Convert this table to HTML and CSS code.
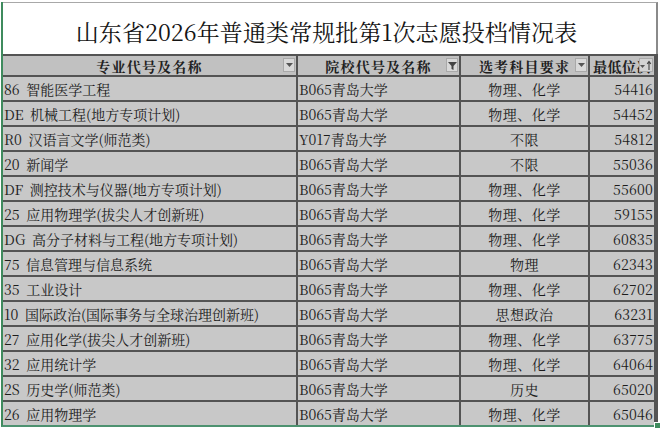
FILE: index.html
```html
<!DOCTYPE html>
<html lang="zh-CN">
<head>
<meta charset="utf-8">
<title>山东省2026年普通类常规批第1次志愿投档情况表</title>
<link rel="stylesheet" href="styles.css">
</head>
<body>
<div class="sheet">
  <div class="title">山东省2026年普通类常规批第1次志愿投档情况表</div>
  <div class="grid">
    <div class="hd">专业代号及名称<span class="btn"><svg width="7" height="4" viewBox="0 0 7 4"><path d="M0 0h7L3.5 4z" fill="#555"/></svg></span></div>
    <div class="hd">院校代号及名称<span class="btn"><svg width="9" height="9" viewBox="0 0 9 9"><path d="M0 1h9L5.5 5v4L3.5 8V5z" fill="#444"/></svg></span></div>
    <div class="hd">选考科目要求<span class="btn"><svg width="7" height="4" viewBox="0 0 7 4"><path d="M0 0h7L3.5 4z" fill="#555"/></svg></span></div>
    <div class="hd hd-last">最低位次<span class="btn btn-sort"><svg width="12" height="10" viewBox="0 0 12 10"><path d="M0 5h5L2.5 8z" fill="#555"/><path d="M9 2v8M7.2 3.8L9 1.5l1.8 2.3" stroke="#444" stroke-width="1.1" fill="none"/></svg></span></div>

    <div class="c name">86 智能医学工程</div><div class="c school">B065青岛大学</div><div class="c subj">物理、化学</div><div class="c num">54416</div>
    <div class="c name">DE 机械工程(地方专项计划)</div><div class="c school">B065青岛大学</div><div class="c subj">物理、化学</div><div class="c num">54452</div>
    <div class="c name">R0 汉语言文学(师范类)</div><div class="c school">Y017青岛大学</div><div class="c subj">不限</div><div class="c num">54812</div>
    <div class="c name">20 新闻学</div><div class="c school">B065青岛大学</div><div class="c subj">不限</div><div class="c num">55036</div>
    <div class="c name">DF 测控技术与仪器(地方专项计划)</div><div class="c school">B065青岛大学</div><div class="c subj">物理、化学</div><div class="c num">55600</div>
    <div class="c name">25 应用物理学(拔尖人才创新班)</div><div class="c school">B065青岛大学</div><div class="c subj">物理、化学</div><div class="c num">59155</div>
    <div class="c name">DG 高分子材料与工程(地方专项计划)</div><div class="c school">B065青岛大学</div><div class="c subj">物理、化学</div><div class="c num">60835</div>
    <div class="c name">75 信息管理与信息系统</div><div class="c school">B065青岛大学</div><div class="c subj">物理</div><div class="c num">62343</div>
    <div class="c name">35 工业设计</div><div class="c school">B065青岛大学</div><div class="c subj">物理、化学</div><div class="c num">62702</div>
    <div class="c name">10 国际政治(国际事务与全球治理创新班)</div><div class="c school">B065青岛大学</div><div class="c subj">思想政治</div><div class="c num">63231</div>
    <div class="c name">27 应用化学(拔尖人才创新班)</div><div class="c school">B065青岛大学</div><div class="c subj">物理、化学</div><div class="c num">63775</div>
    <div class="c name">32 应用统计学</div><div class="c school">B065青岛大学</div><div class="c subj">物理、化学</div><div class="c num">64064</div>
    <div class="c name">2S 历史学(师范类)</div><div class="c school">B065青岛大学</div><div class="c subj">历史</div><div class="c num">65020</div>
    <div class="c name">26 应用物理学</div><div class="c school">B065青岛大学</div><div class="c subj">物理、化学</div><div class="c num">65046</div>
  </div>
  <div class="handle"></div>
</div>
</body>
</html>
```

FILE: styles.css
```css
html, body {
  margin: 0;
  padding: 0;
  background: #ffffff;
}
body {
  width: 660px;
  height: 431px;
  overflow: hidden;
  font-family: "Noto Serif CJK SC", "Liberation Serif", "Noto Sans CJK SC", serif;
  color: #1c1c1c;
}
.sheet {
  position: relative;
  margin-left: 1px;
  width: 655px;
  border-left: 2px solid #3f8b5e;
  border-bottom: 2px solid #4d9270;
}
.title {
  box-sizing: border-box;
  height: 52px;
  margin-top: 2px;
  border-top: 1px solid #a8a8a8;
  border-right: 2px solid #8a8a8a;
  display: flex;
  align-items: center;
  justify-content: center;
  padding-top: 5px;
  padding-right: 6px;
  font-size: 23px;
  letter-spacing: 0.1px;
  color: #141414;
}
.grid {
  display: grid;
  grid-template-columns: 293px 161px 127px 64px;
  grid-template-rows: 19px repeat(14, 23px);
  gap: 2px;
  padding: 2px 2px 0 0;
  background: #545454;
}
.hd {
  position: relative;
  background: #c1c1c1;
  font-weight: bold;
  font-size: 14px;
  letter-spacing: 1.2px;
  display: flex;
  align-items: center;
  justify-content: center;
  white-space: nowrap;
  overflow: hidden;
  color: #202020;
}
.hd-last {
  justify-content: flex-start;
  padding-left: 3px;
  letter-spacing: 0.5px;
}
.btn {
  position: absolute;
  right: 1px;
  top: 2px;
  width: 12px;
  height: 14px;
  background: #d9d9d9;
  border: 1px solid #a9a9a9;
  box-sizing: border-box;
  display: flex;
  align-items: center;
  justify-content: center;
}
.btn-sort {
  width: 14px;
  background: #d3d3d3;
}
.c {
  background: #c8c8c8;
  font-size: 14px;
  display: flex;
  align-items: center;
  white-space: nowrap;
  overflow: hidden;
}
.name {
  padding-left: 1px;
  word-spacing: 3px;
}
.school {
  padding-left: 1px;
}
.subj {
  justify-content: center;
  letter-spacing: 0.5px;
}
.num {
  justify-content: flex-end;
  padding-right: 1px;
  font-size: 14px;
  letter-spacing: 0.2px;
}
.handle {
  position: absolute;
  right: -3px;
  bottom: -4px;
  width: 5px;
  height: 5px;
  background: #3f8b5e;
  border: 1px solid #ffffff;
}
```
